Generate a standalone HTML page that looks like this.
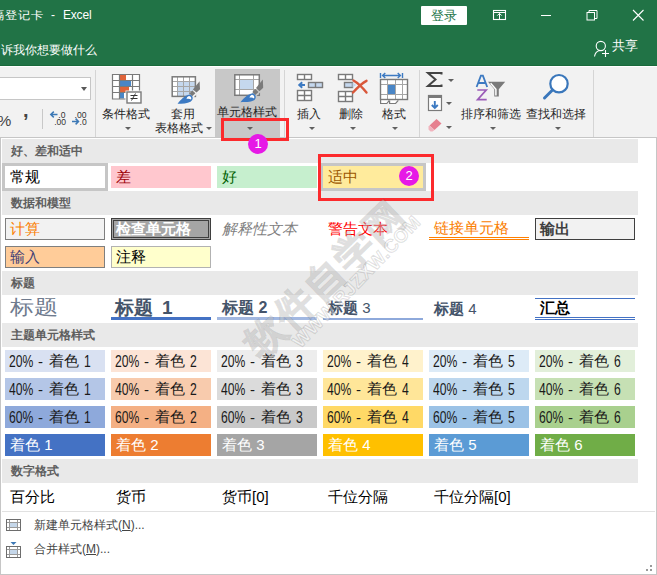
<!DOCTYPE html><html><head><meta charset="utf-8"><style>
*{box-sizing:border-box;margin:0;padding:0}
html,body{width:657px;height:575px;overflow:hidden;background:#fff}
body{position:relative;font-family:"Liberation Sans",sans-serif;color:#262626}
.a{position:absolute;white-space:nowrap}
.t{position:absolute;white-space:nowrap;line-height:1}
.arr{position:absolute;width:0;height:0;border-left:3px solid transparent;border-right:3px solid transparent;border-top:3px solid #606060}
.band{position:absolute;left:2px;width:636px;height:24px;background:#e9e9e9}
.bt{position:absolute;left:9px;top:5px;font-size:12px;line-height:14px;font-weight:bold;color:#5e5e5e}
.cell{position:absolute;width:100px;height:22px;font-size:15px;line-height:22px;padding-left:5px;overflow:hidden;white-space:nowrap}
</style></head><body>
<div class="a" style="left:0;top:0;width:657px;height:66px;background:#217346"></div>
<div class="a" style="left:0;top:65px;width:657px;height:1px;background:#1a6a3b"></div>
<div class="t" style="left:-8px;top:8.5px;font-size:12.5px;color:#fff;transform:scaleY(0.9);transform-origin:0 0;line-height:1.2">隔登记卡</div>
<div class="t" style="left:51px;top:9px;font-size:12px;color:#fff">-</div>
<div class="t" style="left:63px;top:9px;font-size:12px;color:#fff;letter-spacing:-0.2px">Excel</div>
<div class="t" style="left:1px;top:43.5px;font-size:12px;color:#fff">诉我你想要做什么</div>
<div class="a" style="left:421px;top:6px;width:46px;height:19px;background:#fff;border-radius:1px"></div>
<div class="t" style="left:431px;top:9px;font-size:13px;color:#217346">登录</div>
<svg class="a" style="left:488px;top:6px" width="22" height="18" viewBox="488 6 22 18"><rect x="493.5" y="10.5" width="12" height="9" fill="none" stroke="#fff" stroke-width="1.1"/>
<path d="M493.5 12.5H505.5" stroke="#fff" stroke-width="1"/>
<path d="M499.5 19V13.5M497.3 15.6L499.5 13.4L501.7 15.6" fill="none" stroke="#fff" stroke-width="1"/></svg>
<div class="a" style="left:541px;top:15px;width:10px;height:1px;background:#fff"></div>
<svg class="a" style="left:584px;top:8px" width="16" height="14" viewBox="584 8 16 14"><rect x="587" y="12.5" width="7.5" height="7.5" fill="none" stroke="#fff" stroke-width="1"/>
<path d="M589 12.5V10.5H597V18.5H594.5" fill="none" stroke="#fff" stroke-width="1"/></svg>
<svg class="a" style="left:630px;top:8px" width="16" height="14" viewBox="630 8 16 14"><path d="M633 10L643.5 20.5M643.5 10L633 20.5" stroke="#fff" stroke-width="1.1"/></svg>
<svg class="a" style="left:590px;top:38px" width="22" height="22" viewBox="590 38 22 22"><circle cx="600.8" cy="46" r="4.6" fill="none" stroke="#fff" stroke-width="1.1"/>
<path d="M594.5 56.5C595 53 597 51 600 50.5" fill="none" stroke="#fff" stroke-width="1.1"/>
<path d="M605.5 50V57M602 53.5H609" stroke="#fff" stroke-width="1.1"/></svg>
<div class="t" style="left:612px;top:40px;font-size:12.5px;color:#fff">共享</div>
<div class="a" style="left:0;top:66px;width:657px;height:1px;background:#fff"></div>
<div class="a" style="left:0;top:67px;width:657px;height:70px;background:#f2f2f2"></div>
<div class="a" style="left:-2px;top:77px;width:93px;height:23px;background:#fff;border:1px solid #c6c6c6"></div>
<div class="arr" style="left:81px;top:87px;border-top-width:4px;border-left-width:3.5px;border-right-width:3.5px;border-top-color:#595959"></div>
<div class="t" style="left:-2.5px;top:113px;font-size:15.5px;color:#444">%</div>
<div class="t" style="left:23px;top:100px;font-size:20px;font-weight:bold;color:#444">,</div>
<div class="a" style="left:42px;top:109px;width:1px;height:20px;background:#c8c8c8"></div>
<svg class="a" style="left:49px;top:109px" width="40" height="18" viewBox="0 0 40 18">
<path d="M2.5 5.5H8.5M4.8 2.6L1.8 5.5L4.8 8.4" fill="none" stroke="#3c78b5" stroke-width="1.5"/>
<text x="9.3" y="9" font-family="Liberation Sans" font-size="8.6" fill="#333">.0</text>
<text x="5.2" y="16" font-family="Liberation Sans" font-size="8.6" fill="#333">.00</text>
<text x="25.5" y="9" font-family="Liberation Sans" font-size="8.6" fill="#333">.00</text>
<path d="M23 12.5H29.5M26.6 9.6L29.5 12.5L26.6 15.4" fill="none" stroke="#3c78b5" stroke-width="1.5"/>
<text x="30.5" y="16" font-family="Liberation Sans" font-size="8.6" fill="#333">.0</text>
</svg>
<div class="a" style="left:95px;top:70px;width:1px;height:67px;background:#d5d5d5"></div>
<div class="a" style="left:284px;top:70px;width:1px;height:67px;background:#d5d5d5"></div>
<div class="a" style="left:419px;top:70px;width:1px;height:67px;background:#d5d5d5"></div>
<div class="a" style="left:593px;top:70px;width:1px;height:67px;background:#d5d5d5"></div>
<div class="a" style="left:215px;top:69px;width:65px;height:68px;background:#c8c8c8"></div>
<div class="t" style="left:102px;top:108px;font-size:12px;color:#262626">条件格式</div>
<div class="arr" style="left:125px;top:127px"></div>
<div class="t" style="left:171px;top:108px;font-size:12px;color:#262626">套用</div>
<div class="t" style="left:155px;top:122px;font-size:12px;color:#262626">表格格式</div>
<div class="arr" style="left:206px;top:127px"></div>
<div class="t" style="left:217px;top:106px;font-size:12px;color:#262626">单元格样式</div>
<div class="arr" style="left:247px;top:127px"></div>
<div class="t" style="left:297px;top:108px;font-size:12px;color:#262626">插入</div>
<div class="arr" style="left:309px;top:127px"></div>
<div class="t" style="left:339px;top:108px;font-size:12px;color:#262626">删除</div>
<div class="arr" style="left:350px;top:127px"></div>
<div class="t" style="left:382px;top:108px;font-size:12px;color:#262626">格式</div>
<div class="arr" style="left:392px;top:127px"></div>
<div class="t" style="left:461px;top:108px;font-size:12px;color:#262626">排序和筛选</div>
<div class="arr" style="left:490px;top:127px"></div>
<div class="t" style="left:526px;top:108px;font-size:12px;color:#262626">查找和选择</div>
<div class="arr" style="left:555px;top:127px"></div>
<div class="arr" style="left:448px;top:79px"></div>
<div class="arr" style="left:446px;top:102px"></div>
<div class="arr" style="left:446px;top:126px"></div>
<svg class="a" style="left:108px;top:70px" width="40" height="36" viewBox="108 70 40 36">
<rect x="112.5" y="74.5" width="27" height="24.5" fill="#fff"/>
<rect x="120" y="75" width="6" height="5.5" fill="#e0643a"/>
<rect x="120" y="81" width="11" height="5.5" fill="#4a86c6"/>
<rect x="120" y="87" width="9" height="5" fill="#e0643a"/>
<rect x="120" y="92.5" width="4" height="6" fill="#4a86c6"/>
<path d="M112.5 74.5H139.5V99H112.5Z M112.5 80.5H139.5 M112.5 86.5H139.5 M112.5 92.5H139.5 M119.5 74.5V99 M132.5 74.5V99" fill="none" stroke="#7a7a7a" stroke-width="1.2"/>
<rect x="125.5" y="90.5" width="17" height="14" fill="#f2f2f2"/>
<rect x="127" y="92" width="14" height="11" fill="#fff" stroke="#7a7a7a" stroke-width="1.4"/>
<path d="M130.5 95.5H137.5M130.5 98.5H137.5M135.5 93.5L131.5 100.5" fill="none" stroke="#333" stroke-width="1"/>
</svg>
<svg class="a" style="left:166px;top:72px" width="40" height="34" viewBox="166 72 40 34">
<rect x="172" y="77" width="23.5" height="19.5" fill="#fff"/>
<rect x="177.8" y="82" width="17.7" height="14.5" fill="#c5d8ee"/>
<path d="M172 81.5H195.5M172 86.5H195.5M172 91.5H195.5M177.5 77V96.5M183.5 77V96.5M189.5 77V96.5" stroke="#a6a6a6" stroke-width="1" fill="none"/>
<rect x="172.2" y="76.8" width="23.2" height="19.6" fill="none" stroke="#7a7a7a" stroke-width="1.5"/>
<path d="M188.5 99L201 86.5" stroke="#f2f2f2" stroke-width="5"/>
<path d="M199.6 81.3L200 89.3L196.5 92.6L192.9 89.4Z" fill="#7a7a7a"/>
<path d="M192.4 90.4L195.4 93.2L192.2 96.2L189.3 93.4Z" fill="#7a7a7a"/>
<path d="M189.8 94.6C193.5 95.8 193.6 99.8 190.5 101.8C187.5 103.5 182 103.8 177.6 103.8C181 99.5 184.5 95.5 189.8 94.6Z" fill="#3d7ac2"/>
<path d="M189 96C191.2 96.4 191.8 98.2 191 99.6C189.8 98.8 188.3 98.6 186.6 99C186.6 97.6 187.6 96.4 189 96Z" fill="#fff"/>
</svg>
<svg class="a" style="left:228px;top:70px" width="40" height="34" viewBox="228 70 40 34">
<rect x="234.5" y="74.5" width="25" height="21" fill="#fff"/>
<rect x="240" y="80" width="13.5" height="9.5" fill="#c5d8ee"/>
<path d="M234.5 79.5H259.5M234.5 89.5H259.5M239.5 74.5V95.5M253.5 74.5V95.5" stroke="#a6a6a6" stroke-width="1" fill="none"/>
<rect x="234.8" y="74.8" width="24.5" height="20.5" fill="none" stroke="#7a7a7a" stroke-width="1.5"/>
<path d="M250 99L265 84" stroke="#c8c8c8" stroke-width="5"/>
<path d="M262.8 79.6L263.2 87.8L259.5 91.2L256 88Z" fill="#7a7a7a"/>
<path d="M255.4 89L258.5 91.9L255.3 94.9L252.3 92Z" fill="#7a7a7a"/>
<path d="M252.8 93.3C256.5 94.5 256.7 98.6 253.5 100.6C250.5 102.2 245 102.2 240.5 102.2C244 98 247.5 94.2 252.8 93.3Z" fill="#3d7ac2"/>
<path d="M252 94.8C254.2 95.2 254.8 97 254 98.4C252.8 97.6 251.3 97.4 249.6 97.8C249.6 96.4 250.6 95.2 252 94.8Z" fill="#fff"/>
</svg>
<svg class="a" style="left:292px;top:70px" width="40" height="34" viewBox="292 70 40 34">
<g fill="#fff" stroke="#7a7a7a" stroke-width="1.4">
<rect x="297.5" y="74.5" width="14" height="5"/>
<rect x="308.5" y="82.5" width="14" height="5" fill="#c5d8ee"/>
<rect x="297.5" y="90.5" width="14" height="10"/>
</g>
<path d="M304.5 74.5V79.5M315.5 82.5V87.5M304.5 90.5V100.5M297.5 95.5H311.5" stroke="#7a7a7a" stroke-width="1.4" fill="none"/>
<path d="M305 85H299.5M302.2 82.2L299.2 85L302.2 87.8" fill="none" stroke="#3d7ac2" stroke-width="1.9"/>
</svg>
<svg class="a" style="left:334px;top:70px" width="40" height="34" viewBox="334 70 40 34">
<g fill="#fff" stroke="#7a7a7a" stroke-width="1.4">
<rect x="338.5" y="74.5" width="14" height="5"/>
<rect x="344.5" y="82.5" width="8" height="5" fill="#c5d8ee"/>
<rect x="338.5" y="91.5" width="14" height="10"/>
</g>
<path d="M352.5 82.5L356.5 85L352.5 87.5Z" fill="#c5d8ee"/>
<path d="M345.5 74.5V79.5M345.5 91.5V101.5M338.5 96.5H352.5" stroke="#7a7a7a" stroke-width="1.4" fill="none"/>
<path d="M353.5 80.5C358 83 362 87 366.5 92.5M366.5 80.8C362 83 357 88 353 92.5" fill="none" stroke="#d9573a" stroke-width="2.4" stroke-linecap="round"/>
</svg>
<svg class="a" style="left:374px;top:68px" width="40" height="37" viewBox="374 68 40 37">
<path d="M380.5 73V78M402.5 73V78M382.5 75.5H400.5M385.3 73.1L382.6 75.5L385.3 77.9M397.7 73.1L400.4 75.5L397.7 77.9" fill="none" stroke="#3d7ac2" stroke-width="1.4"/>
<path d="M381 100V103.5H386.8L389.5 100.2Z M389.6 100.5V103.5H395.6L398.5 100.2Z" fill="#fff"/>
<path d="M380.6 99.5V103.5H386.8L389.3 100.3M389.6 100.5V103.5H395.6L398.3 100.3" fill="none" stroke="#7a7a7a" stroke-width="1.2"/>
<rect x="380.5" y="79.5" width="27" height="20" fill="#fff"/>
<rect x="388" y="85" width="7" height="9" fill="#4a86c6"/>
<path d="M380.5 84.5H407.5M380.5 94.5H407.5M387.5 79.5V99.5M395.5 79.5V99.5M402.5 79.5V99.5" stroke="#a6a6a6" stroke-width="1" fill="none"/>
<rect x="380.5" y="79.5" width="27" height="20" fill="none" stroke="#7a7a7a" stroke-width="1.4"/>
</svg>
<svg class="a" style="left:420px;top:68px" width="30" height="22" viewBox="420 68 30 22"><path d="M441.5 74.5V73H428L435.5 79.5L428 86H441.5V84.5" fill="none" stroke="#444" stroke-width="2"/></svg>
<svg class="a" style="left:424px;top:92px" width="22" height="22" viewBox="424 92 22 22"><rect x="428.5" y="95.5" width="13" height="15" fill="#fff" stroke="#7a7a7a" stroke-width="1.2"/>
<rect x="428" y="95" width="14" height="3" fill="#7a7a7a"/>
<path d="M434.8 101V108M431.8 105L434.8 108L437.8 105" fill="none" stroke="#3d7ac2" stroke-width="1.9"/></svg>
<svg class="a" style="left:424px;top:116px" width="22" height="18" viewBox="424 116 22 18"><path d="M436.5 119L441.5 123.5L434.5 130L429.5 125.5Z" fill="#e6808f"/><path d="M429.5 125.5L434.5 130L432.5 131.5H430.5L428.5 129.5V126.5Z" fill="#f1b3bd"/></svg>
<svg class="a" style="left:470px;top:70px" width="40" height="34" viewBox="470 70 40 34">
<path d="M476.6 87L480.9 75.6H482.9L487.2 87M478.4 83H485.4" fill="none" stroke="#3d7ac2" stroke-width="1.8"/>
<path d="M477.3 90H486.2L477.6 99.6H486.7" fill="none" stroke="#9b5cb8" stroke-width="1.7"/>
<path d="M488 81.8H505.2L498.8 89.3V96.6H494.3V89.3Z" fill="#7a7a7a"/>
<path d="M490.6 83.3L495.9 89.3V95.4" fill="none" stroke="#fff" stroke-width="1.5"/>
</svg>
<svg class="a" style="left:536px;top:70px" width="40" height="34" viewBox="536 70 40 34"><circle cx="559" cy="83.7" r="8.7" fill="#fff" stroke="#3a77bb" stroke-width="2.2"/>
<path d="M552.5 90L544.5 98" stroke="#3a77bb" stroke-width="3" stroke-linecap="round"/></svg>
<div class="a" style="left:0;top:137px;width:657px;height:438px;background:#fff;border:1px solid #c6c6c6"></div>
<div class="band" style="top:139px"><div class="bt">好、差和适中</div></div>
<div class="band" style="top:191px"><div class="bt">数据和模型</div></div>
<div class="band" style="top:271px"><div class="bt">标题</div></div>
<div class="band" style="top:323px"><div class="bt">主题单元格样式</div></div>
<div class="band" style="top:459px"><div class="bt">数字格式</div></div>
<div class="a" style="left:2px;top:163px;width:106px;height:28px;border:3px solid #c6c6c6"></div>
<div class="cell" style="left:5px;top:166px;background:transparent;color:#000;">常规</div>
<div class="cell" style="left:111px;top:166px;background:#ffc7ce;color:#9c0006;">差</div>
<div class="cell" style="left:217px;top:166px;background:#c6efce;color:#006100;">好</div>
<div class="a" style="left:320px;top:163px;width:106px;height:28px;border:3px solid #c6c6c6"></div>
<div class="cell" style="left:323px;top:166px;background:#ffeb9c;color:#9c5700;">适中</div>
<div class="cell" style="left:5px;top:218px;background:#f2f2f2;color:#fa7d00;border:1px solid #7f7f7f;line-height:20px;padding-left:4px">计算</div>
<div class="cell" style="left:111px;top:218px;background:#a5a5a5;color:#fff;font-weight:bold;border:3px double #3f3f3f;line-height:16px;padding-left:2px">检查单元格</div>
<div class="cell" style="left:217px;top:218px;background:transparent;color:#7f7f7f;font-style:italic">解释性文本</div>
<div class="cell" style="left:323px;top:218px;background:transparent;color:#ff0000;">警告文本</div>
<div class="cell" style="left:429px;top:218px;background:transparent;color:#fa7d00;border-bottom:3px double #ff8001;line-height:19px">链接单元格</div>
<div class="cell" style="left:535px;top:218px;background:#f2f2f2;color:#3f3f3f;font-weight:bold;border:1px solid #3f3f3f;line-height:20px;padding-left:4px">输出</div>
<div class="cell" style="left:5px;top:246px;background:#ffcc99;color:#3f3f76;border:1px solid #7f7f7f;line-height:20px;padding-left:4px">输入</div>
<div class="cell" style="left:111px;top:246px;background:#ffffcc;color:#000;border:1px solid #b2b2b2;line-height:20px;padding-left:4px">注释</div>
<div class="t" style="left:9.5px;top:296px;font-size:23.5px;color:#6f7b8e;transform:scaleY(0.83);transform-origin:0 0;line-height:1.2">标题</div>
<div class="cell" style="left:111px;top:298px;background:transparent;color:#44546a;font-size:19px;font-weight:bold;border-bottom:3px solid #4472c4;line-height:19px;padding-left:4px">标题<span style="margin-left:9px">1</span></div>
<div class="cell" style="left:217px;top:298px;background:transparent;color:#44546a;font-size:16px;font-weight:bold;border-bottom:3px solid #a2b8e1;line-height:19px">标题 2</div>
<div class="cell" style="left:323px;top:298px;background:transparent;color:#44546a;font-size:15px;font-weight:bold;border-bottom:2px solid #8ea9db;line-height:20px">标题 <span style="font-weight:normal">3</span></div>
<div class="cell" style="left:429px;top:298px;background:transparent;color:#44546a;font-size:15px;font-weight:bold">标题 <span style="font-weight:normal">4</span></div>
<div class="cell" style="left:535px;top:298px;background:transparent;color:#000;font-weight:bold;border-top:1px solid #4472c4;border-bottom:3px double #4472c4;line-height:18px">汇总</div>
<div class="a" style="left:5px;top:350px;width:100px;height:22px;background:#d9e1f2"></div>
<div class="t" style="left:9px;top:354px;font-size:16px;color:#1a1a1a;transform:scaleX(0.76);transform-origin:0 0">20%</div>
<div class="t" style="left:38px;top:354px;font-size:15px;color:#1a1a1a">-</div>
<div class="t" style="left:49px;top:353px;font-size:15px;color:#1a1a1a">着色</div>
<div class="t" style="left:84px;top:354px;font-size:16px;color:#1a1a1a;transform:scaleX(0.76);transform-origin:0 0">1</div>
<div class="a" style="left:5px;top:378px;width:100px;height:22px;background:#b4c6e7"></div>
<div class="t" style="left:9px;top:382px;font-size:16px;color:#1a1a1a;transform:scaleX(0.76);transform-origin:0 0">40%</div>
<div class="t" style="left:38px;top:382px;font-size:15px;color:#1a1a1a">-</div>
<div class="t" style="left:49px;top:381px;font-size:15px;color:#1a1a1a">着色</div>
<div class="t" style="left:84px;top:382px;font-size:16px;color:#1a1a1a;transform:scaleX(0.76);transform-origin:0 0">1</div>
<div class="a" style="left:5px;top:406px;width:100px;height:22px;background:#8ea9db"></div>
<div class="t" style="left:9px;top:410px;font-size:16px;color:#1a1a1a;transform:scaleX(0.76);transform-origin:0 0">60%</div>
<div class="t" style="left:38px;top:410px;font-size:15px;color:#1a1a1a">-</div>
<div class="t" style="left:49px;top:409px;font-size:15px;color:#1a1a1a">着色</div>
<div class="t" style="left:84px;top:410px;font-size:16px;color:#1a1a1a;transform:scaleX(0.76);transform-origin:0 0">1</div>
<div class="cell" style="left:5px;top:434px;background:#4472c4;color:#fff;">着色 1</div>
<div class="a" style="left:111px;top:350px;width:100px;height:22px;background:#fce4d6"></div>
<div class="t" style="left:115px;top:354px;font-size:16px;color:#1a1a1a;transform:scaleX(0.76);transform-origin:0 0">20%</div>
<div class="t" style="left:144px;top:354px;font-size:15px;color:#1a1a1a">-</div>
<div class="t" style="left:155px;top:353px;font-size:15px;color:#1a1a1a">着色</div>
<div class="t" style="left:190px;top:354px;font-size:16px;color:#1a1a1a;transform:scaleX(0.76);transform-origin:0 0">2</div>
<div class="a" style="left:111px;top:378px;width:100px;height:22px;background:#f8cbad"></div>
<div class="t" style="left:115px;top:382px;font-size:16px;color:#1a1a1a;transform:scaleX(0.76);transform-origin:0 0">40%</div>
<div class="t" style="left:144px;top:382px;font-size:15px;color:#1a1a1a">-</div>
<div class="t" style="left:155px;top:381px;font-size:15px;color:#1a1a1a">着色</div>
<div class="t" style="left:190px;top:382px;font-size:16px;color:#1a1a1a;transform:scaleX(0.76);transform-origin:0 0">2</div>
<div class="a" style="left:111px;top:406px;width:100px;height:22px;background:#f4b084"></div>
<div class="t" style="left:115px;top:410px;font-size:16px;color:#1a1a1a;transform:scaleX(0.76);transform-origin:0 0">60%</div>
<div class="t" style="left:144px;top:410px;font-size:15px;color:#1a1a1a">-</div>
<div class="t" style="left:155px;top:409px;font-size:15px;color:#1a1a1a">着色</div>
<div class="t" style="left:190px;top:410px;font-size:16px;color:#1a1a1a;transform:scaleX(0.76);transform-origin:0 0">2</div>
<div class="cell" style="left:111px;top:434px;background:#ed7d31;color:#fff;">着色 2</div>
<div class="a" style="left:217px;top:350px;width:100px;height:22px;background:#ededed"></div>
<div class="t" style="left:221px;top:354px;font-size:16px;color:#1a1a1a;transform:scaleX(0.76);transform-origin:0 0">20%</div>
<div class="t" style="left:250px;top:354px;font-size:15px;color:#1a1a1a">-</div>
<div class="t" style="left:261px;top:353px;font-size:15px;color:#1a1a1a">着色</div>
<div class="t" style="left:296px;top:354px;font-size:16px;color:#1a1a1a;transform:scaleX(0.76);transform-origin:0 0">3</div>
<div class="a" style="left:217px;top:378px;width:100px;height:22px;background:#dbdbdb"></div>
<div class="t" style="left:221px;top:382px;font-size:16px;color:#1a1a1a;transform:scaleX(0.76);transform-origin:0 0">40%</div>
<div class="t" style="left:250px;top:382px;font-size:15px;color:#1a1a1a">-</div>
<div class="t" style="left:261px;top:381px;font-size:15px;color:#1a1a1a">着色</div>
<div class="t" style="left:296px;top:382px;font-size:16px;color:#1a1a1a;transform:scaleX(0.76);transform-origin:0 0">3</div>
<div class="a" style="left:217px;top:406px;width:100px;height:22px;background:#c9c9c9"></div>
<div class="t" style="left:221px;top:410px;font-size:16px;color:#1a1a1a;transform:scaleX(0.76);transform-origin:0 0">60%</div>
<div class="t" style="left:250px;top:410px;font-size:15px;color:#1a1a1a">-</div>
<div class="t" style="left:261px;top:409px;font-size:15px;color:#1a1a1a">着色</div>
<div class="t" style="left:296px;top:410px;font-size:16px;color:#1a1a1a;transform:scaleX(0.76);transform-origin:0 0">3</div>
<div class="cell" style="left:217px;top:434px;background:#a5a5a5;color:#fff;">着色 3</div>
<div class="a" style="left:323px;top:350px;width:100px;height:22px;background:#fff2cc"></div>
<div class="t" style="left:327px;top:354px;font-size:16px;color:#1a1a1a;transform:scaleX(0.76);transform-origin:0 0">20%</div>
<div class="t" style="left:356px;top:354px;font-size:15px;color:#1a1a1a">-</div>
<div class="t" style="left:367px;top:353px;font-size:15px;color:#1a1a1a">着色</div>
<div class="t" style="left:402px;top:354px;font-size:16px;color:#1a1a1a;transform:scaleX(0.76);transform-origin:0 0">4</div>
<div class="a" style="left:323px;top:378px;width:100px;height:22px;background:#ffe699"></div>
<div class="t" style="left:327px;top:382px;font-size:16px;color:#1a1a1a;transform:scaleX(0.76);transform-origin:0 0">40%</div>
<div class="t" style="left:356px;top:382px;font-size:15px;color:#1a1a1a">-</div>
<div class="t" style="left:367px;top:381px;font-size:15px;color:#1a1a1a">着色</div>
<div class="t" style="left:402px;top:382px;font-size:16px;color:#1a1a1a;transform:scaleX(0.76);transform-origin:0 0">4</div>
<div class="a" style="left:323px;top:406px;width:100px;height:22px;background:#ffd966"></div>
<div class="t" style="left:327px;top:410px;font-size:16px;color:#1a1a1a;transform:scaleX(0.76);transform-origin:0 0">60%</div>
<div class="t" style="left:356px;top:410px;font-size:15px;color:#1a1a1a">-</div>
<div class="t" style="left:367px;top:409px;font-size:15px;color:#1a1a1a">着色</div>
<div class="t" style="left:402px;top:410px;font-size:16px;color:#1a1a1a;transform:scaleX(0.76);transform-origin:0 0">4</div>
<div class="cell" style="left:323px;top:434px;background:#ffc000;color:#fff;">着色 4</div>
<div class="a" style="left:429px;top:350px;width:100px;height:22px;background:#ddebf7"></div>
<div class="t" style="left:433px;top:354px;font-size:16px;color:#1a1a1a;transform:scaleX(0.76);transform-origin:0 0">20%</div>
<div class="t" style="left:462px;top:354px;font-size:15px;color:#1a1a1a">-</div>
<div class="t" style="left:473px;top:353px;font-size:15px;color:#1a1a1a">着色</div>
<div class="t" style="left:508px;top:354px;font-size:16px;color:#1a1a1a;transform:scaleX(0.76);transform-origin:0 0">5</div>
<div class="a" style="left:429px;top:378px;width:100px;height:22px;background:#bdd7ee"></div>
<div class="t" style="left:433px;top:382px;font-size:16px;color:#1a1a1a;transform:scaleX(0.76);transform-origin:0 0">40%</div>
<div class="t" style="left:462px;top:382px;font-size:15px;color:#1a1a1a">-</div>
<div class="t" style="left:473px;top:381px;font-size:15px;color:#1a1a1a">着色</div>
<div class="t" style="left:508px;top:382px;font-size:16px;color:#1a1a1a;transform:scaleX(0.76);transform-origin:0 0">5</div>
<div class="a" style="left:429px;top:406px;width:100px;height:22px;background:#9bc2e6"></div>
<div class="t" style="left:433px;top:410px;font-size:16px;color:#1a1a1a;transform:scaleX(0.76);transform-origin:0 0">60%</div>
<div class="t" style="left:462px;top:410px;font-size:15px;color:#1a1a1a">-</div>
<div class="t" style="left:473px;top:409px;font-size:15px;color:#1a1a1a">着色</div>
<div class="t" style="left:508px;top:410px;font-size:16px;color:#1a1a1a;transform:scaleX(0.76);transform-origin:0 0">5</div>
<div class="cell" style="left:429px;top:434px;background:#5b9bd5;color:#fff;">着色 5</div>
<div class="a" style="left:535px;top:350px;width:100px;height:22px;background:#e2efda"></div>
<div class="t" style="left:539px;top:354px;font-size:16px;color:#1a1a1a;transform:scaleX(0.76);transform-origin:0 0">20%</div>
<div class="t" style="left:568px;top:354px;font-size:15px;color:#1a1a1a">-</div>
<div class="t" style="left:579px;top:353px;font-size:15px;color:#1a1a1a">着色</div>
<div class="t" style="left:614px;top:354px;font-size:16px;color:#1a1a1a;transform:scaleX(0.76);transform-origin:0 0">6</div>
<div class="a" style="left:535px;top:378px;width:100px;height:22px;background:#c6e0b4"></div>
<div class="t" style="left:539px;top:382px;font-size:16px;color:#1a1a1a;transform:scaleX(0.76);transform-origin:0 0">40%</div>
<div class="t" style="left:568px;top:382px;font-size:15px;color:#1a1a1a">-</div>
<div class="t" style="left:579px;top:381px;font-size:15px;color:#1a1a1a">着色</div>
<div class="t" style="left:614px;top:382px;font-size:16px;color:#1a1a1a;transform:scaleX(0.76);transform-origin:0 0">6</div>
<div class="a" style="left:535px;top:406px;width:100px;height:22px;background:#a9d08e"></div>
<div class="t" style="left:539px;top:410px;font-size:16px;color:#1a1a1a;transform:scaleX(0.76);transform-origin:0 0">60%</div>
<div class="t" style="left:568px;top:410px;font-size:15px;color:#1a1a1a">-</div>
<div class="t" style="left:579px;top:409px;font-size:15px;color:#1a1a1a">着色</div>
<div class="t" style="left:614px;top:410px;font-size:16px;color:#1a1a1a;transform:scaleX(0.76);transform-origin:0 0">6</div>
<div class="cell" style="left:535px;top:434px;background:#70ad47;color:#fff;">着色 6</div>
<div class="cell" style="left:5px;top:486px;background:transparent;color:#000;">百分比</div>
<div class="cell" style="left:111px;top:486px;background:transparent;color:#000;">货币</div>
<div class="cell" style="left:217px;top:486px;background:transparent;color:#000;">货币[0]</div>
<div class="cell" style="left:323px;top:486px;background:transparent;color:#000;">千位分隔</div>
<div class="cell" style="left:429px;top:486px;background:transparent;color:#000;">千位分隔[0]</div>
<div class="a" style="left:2px;top:511px;width:653px;height:1px;background:#e1e1e1"></div>
<svg class="a" style="left:5px;top:517px" width="18" height="16" viewBox="0 0 18 16">
<rect x="1.5" y="2.5" width="14" height="11" fill="#fff" stroke="#6d6d6d"/>
<rect x="5" y="5" width="7" height="6" fill="#c5d7ea"/>
<path d="M1.5 5.5H15.5M1.5 10.5H15.5M4.5 2.5V13.5M12.5 2.5V13.5" stroke="#9a9a9a" fill="none"/>
<rect x="1.5" y="2.5" width="14" height="11" fill="none" stroke="#6d6d6d"/></svg>
<svg class="a" style="left:5px;top:541px" width="18" height="18" viewBox="0 0 18 18">
<path d="M5.5 1H11.5L8.5 4Z" fill="#3c78b5"/>
<rect x="1.5" y="5.5" width="14" height="11" fill="#fff" stroke="#6d6d6d"/>
<rect x="5" y="8" width="7" height="6" fill="#c5d7ea"/>
<path d="M1.5 8.5H15.5M1.5 13.5H15.5M4.5 5.5V16.5M12.5 5.5V16.5" stroke="#9a9a9a" fill="none"/>
<rect x="1.5" y="5.5" width="14" height="11" fill="none" stroke="#6d6d6d"/></svg>
<div class="t" style="left:34px;top:519px;font-size:12px;color:#444">新建单元格样式(<u>N</u>)...</div>
<div class="t" style="left:34px;top:543px;font-size:12px;color:#444">合并样式(<u>M</u>)...</div>
<div class="a" style="left:650px;top:565px;width:2px;height:2px;background:#9a9a9a"></div>
<div class="a" style="left:646px;top:569px;width:2px;height:2px;background:#9a9a9a"></div>
<div class="a" style="left:650px;top:569px;width:2px;height:2px;background:#9a9a9a"></div>
<div class="a" style="left:221px;top:118px;width:68px;height:23px;border:3px solid #fc2a2d"></div>
<div class="a" style="left:318px;top:154px;width:116px;height:47px;border:3px solid #fc2a2d"></div>
<div class="a" style="left:248px;top:134px;width:20px;height:20px;border-radius:50%;background:#e619e6;color:#fff;font-size:13px;line-height:20px;text-align:center">1</div>
<div class="a" style="left:399px;top:166px;width:20px;height:20px;border-radius:50%;background:#e619e6;color:#fff;font-size:13px;line-height:20px;text-align:center">2</div>
<div class="t" style="left:325px;top:279px;font-size:39px;font-weight:bold;color:rgba(255,255,255,0.4);-webkit-text-stroke:1.5px rgba(0,0,0,0.12);transform:translate(-50%,-50%) rotate(-44deg);letter-spacing:2px">软件自学网</div>
<div class="t" style="left:357px;top:282px;font-size:18.5px;font-weight:bold;color:rgba(255,255,255,0.4);-webkit-text-stroke:1.2px rgba(0,0,0,0.12);transform:translate(-50%,-50%) rotate(-46deg);letter-spacing:0.5px">WWW.RJZXW.COM</div>
</body></html>
